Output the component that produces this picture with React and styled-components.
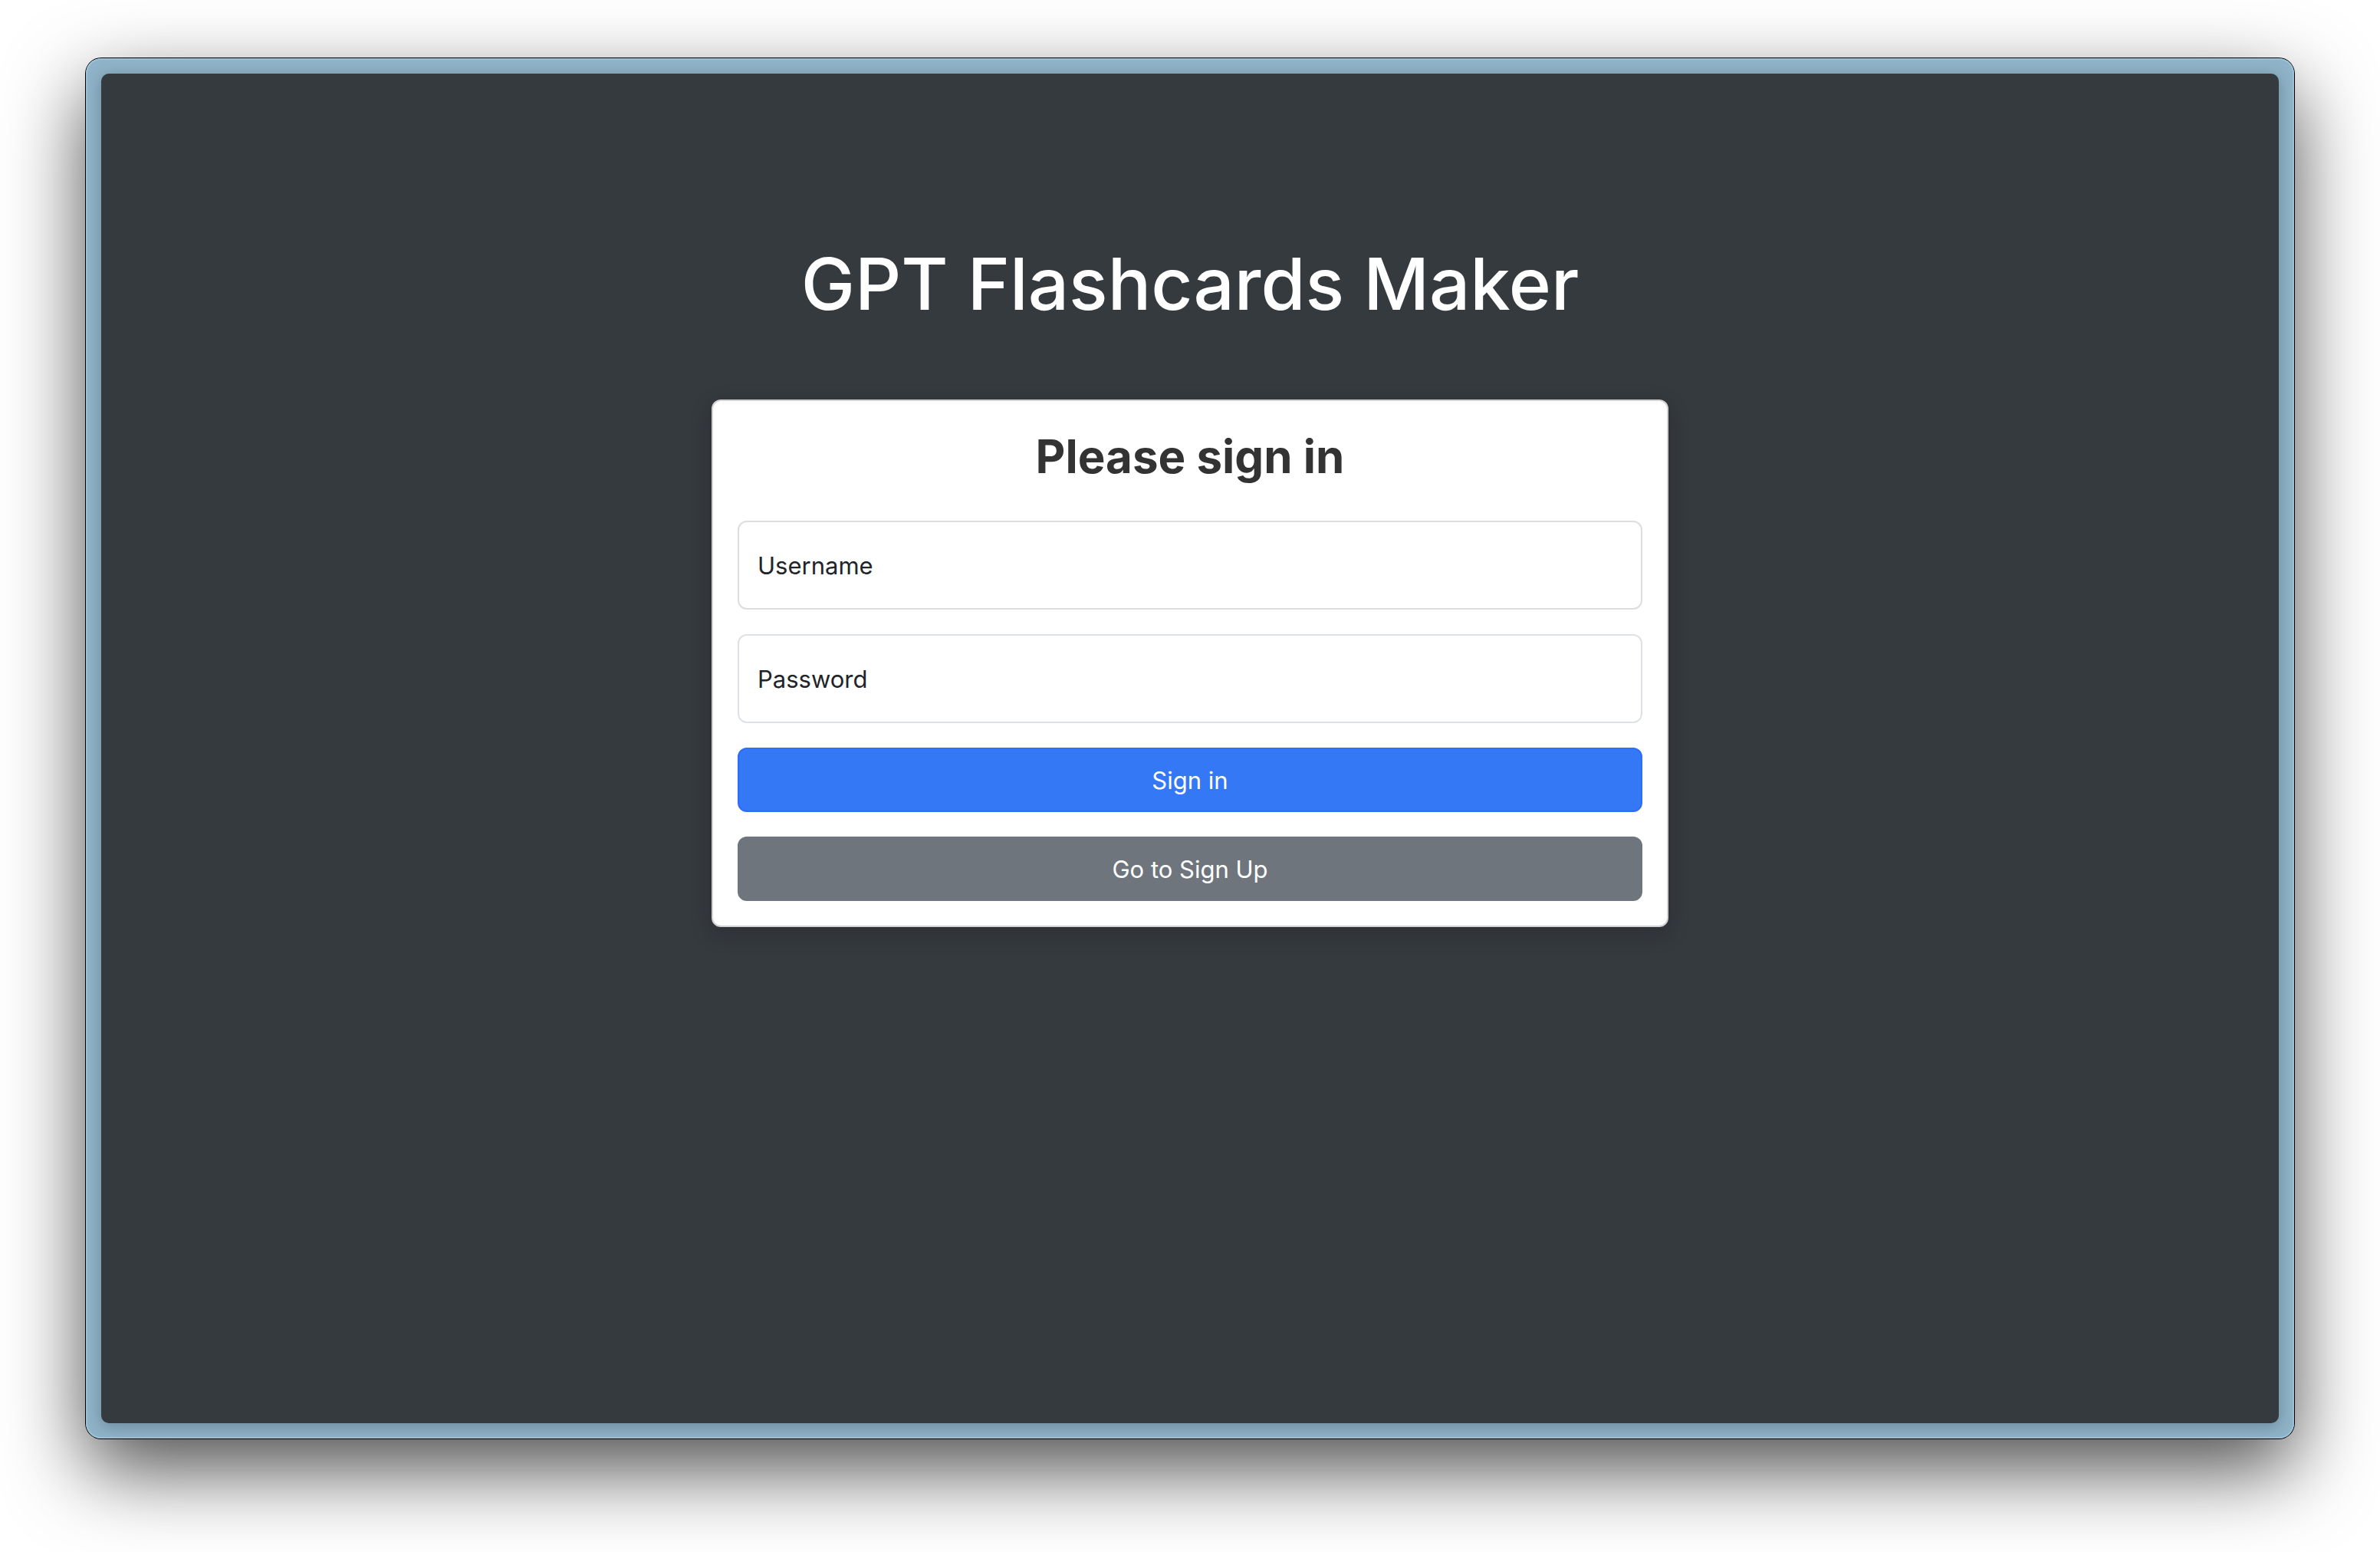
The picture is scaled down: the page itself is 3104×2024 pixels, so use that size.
import React from "react";
import styled, { createGlobalStyle } from "styled-components";

const GlobalStyle = createGlobalStyle`
  *, *::before, *::after { box-sizing: border-box; }
  body {
    margin: 0;
    background: #ffffff;
    color: #212529;
    font-family: Inter, "Liberation Sans", sans-serif;
    font-size: 31px;
    line-height: 48px;
  }
`;

const Backdrop = styled.div`
  display: flex;
  min-height: 100vh;
  padding: 76px 112px 148px;
  overflow: hidden;
`;

const WindowFrame = styled.div`
  flex: 1;
  display: flex;
  padding: 20px;
  border-radius: 20px;
  background: #8fb3c8;
  box-shadow:
    inset 0 0 0 2px #9cc2d8,
    0 0 0 1px #000000,
    0 40px 104px rgba(0, 0, 0, 0.7);
`;

const Page = styled.main`
  flex: 1;
  display: flex;
  flex-direction: column;
  align-items: center;
  padding: 210px 32px 32px;
  border-radius: 10px;
  background: #353a3e;
  box-shadow: 0 4px 20px rgba(0, 0, 0, 0.25);
`;

const Title = styled.h1`
  margin: 0 0 87px;
  color: #ffffff;
  font-size: 94px;
  font-weight: 500;
  line-height: 128px;
  text-align: center;
`;

const Card = styled.form`
  display: flex;
  flex-direction: column;
  gap: 32px;
  width: 100%;
  max-width: 1248px;
  padding: 32px;
  border: 2px solid #d2d3d4;
  border-radius: 12px;
  background: #ffffff;
  box-shadow: 0 8px 28px rgba(24, 10, 24, 0.24);
`;

const CardTitle = styled.h2`
  margin: 0 0 12px;
  color: #333333;
  font-size: 60px;
  font-weight: 700;
  line-height: 80px;
  text-align: center;
`;

const Field = styled.div`
  display: grid;
  align-items: center;

  > * { grid-area: 1 / 1; }
`;

const FieldLabel = styled.label`
  justify-self: start;
  padding: 2px 0 0 26px;
  pointer-events: none;
`;

const FieldInput = styled.input`
  width: 100%;
  height: 116px;
  padding: 52px 24px 20px;
  border: 2px solid ${({ $tone }) => $tone};
  border-radius: 12px;
  background: #ffffff;
  color: inherit;
  font: inherit;
`;

const Button = styled.button`
  width: 100%;
  padding: 17px 24px 15px;
  border: 2px solid ${({ $edge }) => $edge};
  border-radius: 12px;
  background: ${({ $fill }) => $fill};
  color: #ffffff;
  font: inherit;
  cursor: pointer;
`;

export default function App() {
  return (
    <>
      <GlobalStyle />
      <Backdrop>
        <WindowFrame>
          <Page>
            <Title>GPT Flashcards Maker</Title>
            <Card onSubmit={(event) => event.preventDefault()}>
              <CardTitle>Please sign in</CardTitle>
              <Field>
                <FieldInput id="username" type="text" autoComplete="username" $tone="#dddddd" />
                <FieldLabel htmlFor="username">Username</FieldLabel>
              </Field>
              <Field>
                <FieldInput id="password" type="password" autoComplete="current-password" $tone="#dee2e6" />
                <FieldLabel htmlFor="password">Password</FieldLabel>
              </Field>
              <Button type="submit" $fill="#3478f6" $edge="#2f6df6">Sign in</Button>
              <Button type="button" $fill="#6e757c" $edge="#6e757c">Go to Sign Up</Button>
            </Card>
          </Page>
        </WindowFrame>
      </Backdrop>
    </>
  );
}
